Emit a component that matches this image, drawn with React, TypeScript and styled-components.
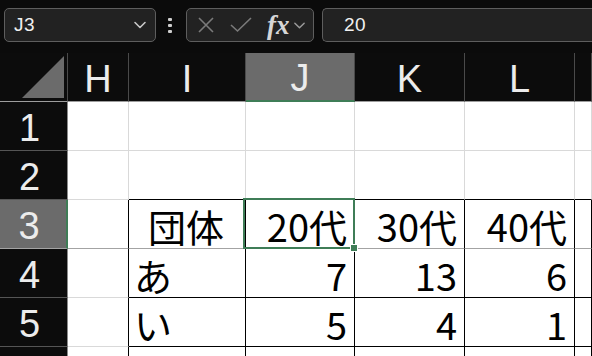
import React from 'react';
import styled, { createGlobalStyle } from 'styled-components';

const GlobalStyle = createGlobalStyle`
    html, body {
        margin: 0;
        padding: 0;
        background: #0b0b0b;
        overflow: hidden;
    }
    * {
        box-sizing: border-box;
    }
`;

const GREEN = '#3f7d57';
const GRID = '#d9d9d9';
const FREEZE = '#a3a3a3';

const Page = styled.div`
    width: 592px;
    height: 356px;
    overflow: hidden;
    background: #0b0b0b;
    display: flex;
    flex-direction: column;
`;

const FormulaBar = styled.div`
    flex: none;
    height: 53px;
    padding: 8px 0 0 4px;
    display: flex;
    align-items: flex-start;
`;

const Box = styled.div<{ $width?: number; $grow?: boolean }>`
    height: 34px;
    width: ${(p) => (p.$width ? `${p.$width}px` : 'auto')};
    flex: ${(p) => (p.$grow ? '1' : 'none')};
    background: #222222;
    border: 1px solid #5e5e5e;
    border-radius: 5px;
    display: flex;
    align-items: center;
`;

const NameBox = styled(Box)`
    padding: 0 8px 0 9px;
    justify-content: space-between;
    margin-right: 12px;
`;

const BarText = styled.span`
    font-family: 'Liberation Sans', Arial, sans-serif;
    font-size: 19px;
    font-weight: 300;
    color: #f0f0f0;
    letter-spacing: 0.5px;
`;

const Dots = styled.div`
    flex: none;
    width: 5px;
    height: 34px;
    display: flex;
    flex-direction: column;
    justify-content: center;
    gap: 3px;
    margin-right: 13px;

    span {
        width: 4px;
        height: 3px;
        background: #cfcfcf;
        border-radius: 1px;
    }
`;

const FxBox = styled(Box)`
    padding: 0 3px 0 10px;
    margin-right: 8px;
`;

const Fx = styled.span`
    font-family: 'Liberation Serif', 'Times New Roman', serif;
    font-style: italic;
    font-weight: bold;
    font-size: 27px;
    color: #d6d6d6;
    margin: 0 3px 0 15px;
    line-height: 1;
`;

const FormulaBox = styled(Box)`
    padding-left: 21px;
    border-right: none;
    border-radius: 5px 0 0 5px;
`;

const Sheet = styled.div`
    flex: none;
    display: grid;
    grid-template-columns: 68px 61px 117px 109px 110px 110px 1fr;
    grid-auto-rows: 49px;
`;

const ColHeader = styled.div<{ $active?: boolean }>`
    background: ${(p) => (p.$active ? '#6b6b6b' : '#0c0c0c')};
    border-right: 1px solid #4a4a4a;
    border-bottom: ${(p) => (p.$active ? `2px solid ${GREEN}` : '1px solid #9d9d9d')};
    display: flex;
    align-items: center;
    justify-content: center;
    padding-top: 4px;
    font-family: 'Liberation Sans', Arial, sans-serif;
    font-size: 38px;
    color: #ececec;
`;

const Corner = styled.div`
    background: #0c0c0c;
    border-right: 1px solid #4a4a4a;
    border-bottom: 1px solid #9d9d9d;
    display: flex;
    align-items: flex-end;
    justify-content: flex-end;
    padding: 0 3px 3px 0;
`;

const RowHeader = styled.div<{ $active?: boolean; $bottom: string }>`
    background: ${(p) => (p.$active ? '#6b6b6b' : '#0c0c0c')};
    border-right: ${(p) => (p.$active ? `2px solid ${GREEN}` : '1px solid #8a8a8a')};
    border-bottom: 1px solid ${(p) => p.$bottom};
    display: flex;
    align-items: center;
    justify-content: center;
    padding: 4px 8px 0 0;
    font-family: 'Liberation Sans', Arial, sans-serif;
    font-size: 38px;
    color: #ececec;
`;

const Cell = styled.div<{ $align: 'left' | 'right' | 'center'; $right: string; $bottom: string; $selected?: boolean }>`
    position: ${(p) => (p.$selected ? 'relative' : 'static')};
    background: #ffffff;
    border-right: 1px solid ${(p) => p.$right};
    border-bottom: 1px solid ${(p) => p.$bottom};
    display: flex;
    align-items: flex-end;
    justify-content: ${(p) => (p.$align === 'left' ? 'flex-start' : p.$align === 'right' ? 'flex-end' : 'center')};
    padding: 0 7px 2px 5px;
    font-family: 'Noto Sans CJK JP', 'Liberation Sans', sans-serif;
    font-size: 38px;
    line-height: 40px;
    color: #000000;
    white-space: nowrap;

    ${(p) =>
        p.$selected &&
        `
        &::after {
            content: '';
            position: absolute;
            left: -3px;
            top: -2px;
            right: -1px;
            bottom: -1px;
            border: 2px solid ${GREEN};
            pointer-events: none;
        }
        &::before {
            content: '';
            position: absolute;
            right: -4px;
            bottom: -4px;
            width: 6px;
            height: 6px;
            background: ${GREEN};
            border: 1px solid #ffffff;
            z-index: 2;
        }
    `}
`;

const columns = ['H', 'I', 'J', 'K', 'L', 'M'];

type Align = 'left' | 'right' | 'center';
type CellData = { text: string; align: Align };

const row = (label: string, labelAlign: Align, values: string[]): CellData[] => [
    { text: '', align: 'left' },
    { text: label, align: labelAlign },
    ...values.map((v) => ({ text: v, align: 'right' as Align })),
    { text: '', align: 'left' },
];

const data: Record<number, CellData[]> = {
    3: row('団体', 'center', ['20代', '30代', '40代']),
    4: row('あ', 'left', ['7', '13', '6']),
    5: row('い', 'left', ['5', '4', '1']),
    6: row('う', 'left', ['', '', '']),
};

const rows = [1, 2, 3, 4, 5, 6];

const Chevron = ({ color, size = 14 }: { color: string; size?: number }) => (
    <svg width={size} height={size} viewBox="0 0 14 14" fill="none">
        <path d="M2 4.5 L7 9.5 L12 4.5" stroke={color} strokeWidth="1.6" strokeLinecap="round" strokeLinejoin="round" />
    </svg>
);

const CrossIcon = () => (
    <svg width="18" height="18" viewBox="0 0 18 18" fill="none">
        <path d="M2 2 L16 16 M16 2 L2 16" stroke="#7a7a7a" strokeWidth="1.6" />
    </svg>
);

const CheckIcon = () => (
    <svg width="22" height="16" viewBox="0 0 22 16" fill="none" style={{ marginLeft: 15 }}>
        <path d="M1 8 L7.5 14 L21 1" stroke="#7a7a7a" strokeWidth="1.6" />
    </svg>
);

const CornerTriangle = () => (
    <svg width="42" height="42" viewBox="0 0 42 42">
        <polygon points="42,0 42,42 0,42" fill="#6b6b6b" />
    </svg>
);

function borderFor(r: number, col: number) {
    const right = r >= 3 ? '#000000' : GRID;
    let bottom = GRID;
    if (r === 3) bottom = FREEZE;
    else if ((r === 2 || r >= 4) && col >= 1) bottom = '#000000';
    return { right, bottom };
}

export default function App() {
    return (
        <Page>
            <GlobalStyle />
            <FormulaBar>
                <NameBox $width={152}>
                    <BarText>J3</BarText>
                    <Chevron color="#c8c8c8" />
                </NameBox>
                <Dots>
                    <span />
                    <span />
                    <span />
                </Dots>
                <FxBox $width={128}>
                    <CrossIcon />
                    <CheckIcon />
                    <Fx>fx</Fx>
                    <Chevron color="#9a9a9a" size={13} />
                </FxBox>
                <FormulaBox $grow>
                    <BarText>20</BarText>
                </FormulaBox>
            </FormulaBar>

            <Sheet>
                <Corner>
                    <CornerTriangle />
                </Corner>
                {columns.map((c) => (
                    <ColHeader key={c} $active={c === 'J'}>
                        {c === 'M' ? '' : c}
                    </ColHeader>
                ))}

                {rows.map((r) => (
                    <React.Fragment key={r}>
                        <RowHeader $active={r === 3} $bottom={r === 3 ? FREEZE : '#555555'}>
                            {r}
                        </RowHeader>
                        {columns.map((c, ci) => {
                            const cell = data[r]?.[ci] ?? { text: '', align: 'left' as Align };
                            const { right, bottom } = borderFor(r, ci);
                            return (
                                <Cell
                                    key={c}
                                    $align={cell.align}
                                    $right={right}
                                    $bottom={bottom}
                                    $selected={r === 3 && c === 'J'}
                                >
                                    {cell.text}
                                </Cell>
                            );
                        })}
                    </React.Fragment>
                ))}
            </Sheet>
        </Page>
    );
}
